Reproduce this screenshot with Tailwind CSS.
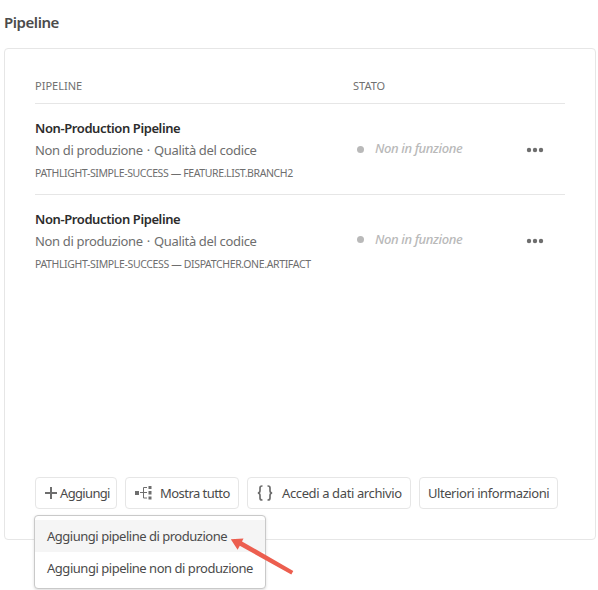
<!DOCTYPE html>
<html lang="it">
<head>
<meta charset="utf-8">
<title>Pipeline</title>
<script src="https://cdn.jsdelivr.net/npm/@tailwindcss/browser@4"></script>
</head>
<body class="w-[598px] h-[590px] overflow-hidden bg-white font-['Noto_Sans',sans-serif] text-[13px] text-[#4b4b4b] whitespace-nowrap">
<div class="relative h-full pl-1 pt-3">
  <h1 class="h-9 text-[15px] leading-[21px] font-semibold tracking-[-0.45px]">Pipeline</h1>

  <section class="flex flex-col w-[592px] h-[492px] border border-[#e6e6e6] rounded pt-[27px] pl-[30px] pr-[30px] pb-[30px]">
    <div class="flex h-7 border-b border-[#e6e6e6] text-[11px] leading-5 text-[#707070]">
      <div class="w-[318px]">PIPELINE</div>
      <div>STATO</div>
    </div>

    <div class="flex items-start h-[91px] pt-[13px] border-b border-[#e6e6e6]">
      <div class="w-[318px] text-[#6e6e6e]">
        <div class="leading-[22px] font-semibold tracking-[-0.4px] text-[#2c2c2c]">Non-Production Pipeline</div>
        <div class="leading-[22px] tracking-[-0.34px]">Non di produzione <span class="mx-px">·</span> Qualità del codice</div>
        <div class="text-[10.5px] leading-6 tracking-[-0.38px]">PATHLIGHT-SIMPLE-SUCCESS — FEATURE.LIST.BRANCH2</div>
      </div>
      <div class="flex items-center w-[173px] h-[22px] mt-[21px] pl-[3.5px]">
        <span class="size-[7px] rounded-full bg-[#b9b9b9]"></span>
        <span class="ml-[11.5px] italic font-medium tracking-[-0.38px] text-[#b9b9b9]">Non in funzione</span>
      </div>
      <svg class="mt-[30px]" width="18" height="6" fill="#6e6e6e"><circle cx="3" cy="3" r="2.2"/><circle cx="9" cy="3" r="2.2"/><circle cx="15" cy="3" r="2.2"/></svg>
    </div>

    <div class="flex items-start h-[90px] pt-[13px]">
      <div class="w-[318px] text-[#6e6e6e]">
        <div class="leading-[22px] font-semibold tracking-[-0.4px] text-[#2c2c2c]">Non-Production Pipeline</div>
        <div class="leading-[22px] tracking-[-0.34px]">Non di produzione <span class="mx-px">·</span> Qualità del codice</div>
        <div class="text-[10.5px] leading-6 tracking-[-0.36px]">PATHLIGHT-SIMPLE-SUCCESS — DISPATCHER.ONE.ARTIFACT</div>
      </div>
      <div class="flex items-center w-[173px] h-[22px] mt-[21px] pl-[3.5px]">
        <span class="size-[7px] -mt-0.5 rounded-full bg-[#b9b9b9]"></span>
        <span class="ml-[11.5px] italic font-medium tracking-[-0.38px] text-[#b9b9b9]">Non in funzione</span>
      </div>
      <svg class="mt-[30px]" width="18" height="6" fill="#6e6e6e"><circle cx="3" cy="3" r="2.2"/><circle cx="9" cy="3" r="2.2"/><circle cx="15" cy="3" r="2.2"/></svg>
    </div>

    <div class="flex gap-2 mt-auto h-8">
      <button class="flex items-center w-[82px] h-8 pl-[9px] border border-[#e6e6e6] rounded">
        <svg width="12" height="12" fill="#6e6e6e" shape-rendering="crispEdges"><path d="M5 0h2v12H5zM0 5h12v2H0z"/></svg>
        <span class="ml-[3px] pt-px tracking-[-0.66px]">Aggiungi</span>
      </button>
      <button class="flex items-center w-[114px] h-8 pl-[9px] border border-[#e6e6e6] rounded">
        <svg width="17" height="14" fill="#6e6e6e"><path d="M0 5h4v4H0zM13.500 0h3v3h-3zM13.500 5h3v3.500h-3zM13.500 10.500h3v3h-3z"/><path d="M5 6.500H12M12 1.500H8.500v10.500H12" fill="none" stroke="#6e6e6e"/></svg>
        <span class="ml-2 pt-px tracking-[-0.55px]">Mostra tutto</span>
      </button>
      <button class="flex items-center w-[164px] h-8 pl-[9px] border border-[#e6e6e6] rounded">
        <svg width="16" height="16" fill="none" stroke="#6e6e6e" stroke-width="1.7"><path d="M5.500 1H5C3.500 1 3 1.800 3 3v2.500C3 7 2.300 8 .8 8 2.300 8 3 9 3 10.500V13c0 1.200.5 2 2 2h.5M10.500 1h.5c1.500 0 2 .8 2 2v2.500c0 1.500.7 2.500 2.200 2.500-1.500 0-2.200 1-2.200 2.500V13c0 1.200-.5 2-2 2h-.5"/></svg>
        <span class="ml-[9px] pt-px tracking-[-0.38px]">Accedi a dati archivio</span>
      </button>
      <button class="flex items-center w-[139px] h-8 pl-2 border border-[#e6e6e6] rounded">
        <span class="pt-px tracking-[-0.44px]">Ulteriori informazioni</span>
      </button>
    </div>
  </section>

  <div class="absolute left-[34px] top-[515px] w-[232px] h-[74px] py-1 bg-white border border-[#c9c9c9] rounded shadow-[0_1px_3px_rgba(0,0,0,0.14)] leading-8">
    <div class="h-8 pl-3 bg-[#f5f5f5] tracking-[-0.48px]">Aggiungi pipeline di produzione</div>
    <div class="h-8 pl-3 tracking-[-0.47px]">Aggiungi pipeline non di produzione</div>
  </div>

  <svg class="absolute left-[228px] top-[532px]" width="70" height="46" fill="#ec5e4f"><path d="M2.800 7.200 15.500 6.500 14 9.400 65.300 39 63.300 42.500 11.800 13.700 9.600 17.800Z"/></svg>
</div>
</body>
</html>
